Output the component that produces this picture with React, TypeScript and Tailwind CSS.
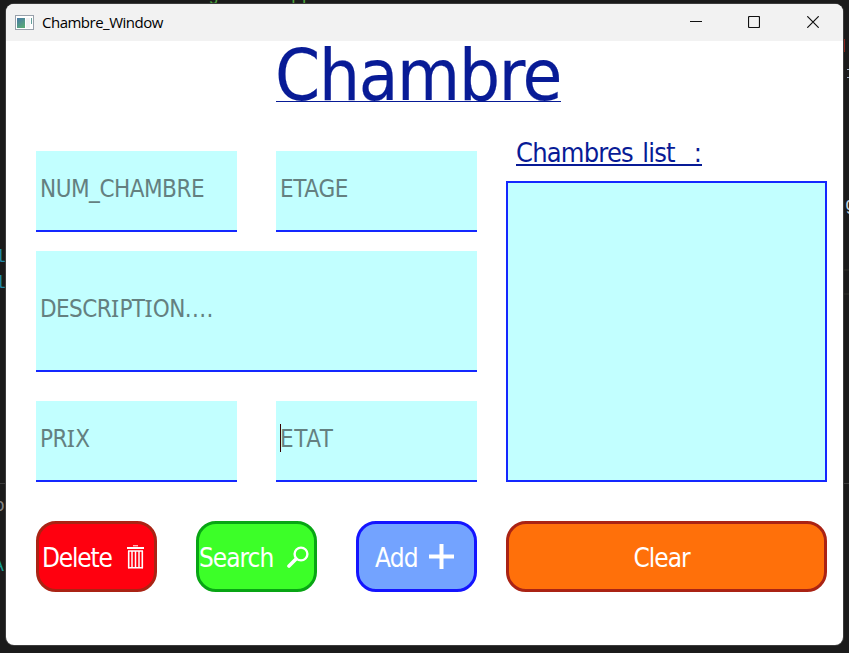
import React from "react";

const tahoma = "font-['DejaVu_Sans_Condensed','DejaVu_Sans',sans-serif] [font-stretch:condensed]";

function Caps({ text }: { text: string }) {
  return (
    <>
      {text.split(/(I)/).map((part, i) =>
        part === "I" ? (
          <span key={i} className="font-['Noto_Sans',sans-serif] leading-none tracking-[0.2px] [font-stretch:normal]">I</span>
        ) : (
          part
        )
      )}
    </>
  );
}

function Field({ label, tail, className, spacing, focused }: { label: string; tail?: string; className: string; spacing: string; focused?: boolean }) {
  return (
    <div className={`flex items-center border-b-2 border-[#1428ff] bg-[#c2ffff] pl-1 ${className}`}>
      {focused && <span className="-mr-px h-7 w-px shrink-0 -translate-y-[3px] bg-[#3a0000]" />}
      <span className={`h-7 -translate-y-[2px] whitespace-pre text-[24px] leading-7 text-[#648080] ${spacing}`}>
        <Caps text={label} />
        {tail && <span className="tracking-[0.4px]">{tail}</span>}
      </span>
    </div>
  );
}

function Backdrop() {
  return (
    <div className="absolute inset-0 overflow-hidden font-['Liberation_Mono',monospace] text-[18px] leading-5">
      <span className="absolute left-[208px] top-[-15px] text-[#4ba03c]">g</span>
      <span className="absolute left-[291px] top-[-15px] text-[#4ba03c]">pp</span>
      <span className="absolute left-[-5px] top-[247px] text-[#2387a5]">l</span>
      <span className="absolute left-[-5px] top-[273px] text-[#2387a5]">l</span>
      <span className="absolute left-[-6px] top-[496px] text-[#858585]">or</span>
      <span className="absolute left-[-7px] top-[556px] text-[#189c91]">A'</span>
      <span className="absolute left-0 top-[483px] h-px w-full bg-[#3c3c3c]" />
      <span className="absolute left-[843px] top-[39px] h-[13px] w-[2px] bg-[#8a251e]" />
      <span className="absolute left-[847px] top-[69px] h-px w-[2px] bg-[#a5b5c8]" />
      <span className="absolute left-[847px] top-[77px] h-px w-[2px] bg-[#a5b5c8]" />
      <span className="absolute left-[845px] top-[195px] text-[#c8d5e0]">g</span>
      <span className="absolute left-[843px] top-[269px] h-[2px] w-[6px] bg-[#252522]" />
      <span className="absolute left-[843px] top-[293px] h-[2px] w-[6px] bg-[#252522]" />
    </div>
  );
}

export default function App() {
  return (
    <div className={`relative h-[653px] w-[849px] overflow-hidden bg-[#1b1b1b] pl-[6px] pt-1 ${tahoma}`}>
      <Backdrop />
      <div className="relative h-[641px] w-[837px] overflow-hidden rounded-[8px] bg-white shadow-[0_0_0_1px_#3c3c3c]">
        <header className="flex h-[37px] items-center bg-[#f2f2f2] pl-[9px]">
          <svg width="19" height="16" viewBox="0 0 19 16" shapeRendering="crispEdges">
            <defs>
              <linearGradient id="pane" x1="0" y1="0" x2="0.6" y2="1">
                <stop offset="0" stopColor="#4878a8" />
                <stop offset="1" stopColor="#58a878" />
              </linearGradient>
            </defs>
            <rect x="0.5" y="0.5" width="18" height="14" fill="#fff" stroke="#98a0aa" />
            <rect x="2" y="3" width="8" height="10" fill="url(#pane)" />
            <rect x="11" y="3" width="4" height="10" fill="#f0f1f3" />
            <rect x="16" y="3" width="1" height="6" fill="#66a09c" />
          </svg>
          <span className="ml-2 -translate-y-px font-['Open_Sans',sans-serif] text-[15px] leading-5 tracking-[-0.5px] text-black [font-stretch:normal]">Chambre_Window</span>
          <div className="ml-auto mr-[24px] flex -translate-y-[1px] items-center gap-[46px]">
            <svg width="12" height="12" viewBox="0 0 12 12" className="-translate-x-px"><path d="M0 5.5H12" stroke="#111" /></svg>
            <svg width="12" height="12" viewBox="0 0 12 12" className="-translate-x-px"><rect x=".5" y=".5" width="11" height="11" rx="1" fill="none" stroke="#111" strokeWidth="1.2" /></svg>
            <svg width="12" height="12" viewBox="0 0 12 12"><path d="M.3.3L11.7 11.7M11.7.3L.3 11.7" stroke="#111" strokeWidth="1.2" /></svg>
          </div>
        </header>

        <h1 className="ml-[270px] mt-[-2px] flex h-[63px] w-[285px] items-end border-b border-[#081b96] text-[72px] leading-[85px] tracking-[-1.3px] text-[#081b96] [-webkit-text-stroke:0.2px_#081b96]">
          <span className="-mb-[17px] -ml-px">Chambre</span>
        </h1>

        <main className="ml-[30px] mt-[29px] flex gap-[29px]">
          <section className="w-[441px] pt-5">
            <div className="flex justify-between">
              <Field label="NUM_CHAMBRE" spacing="tracking-[-0.5px]" className="h-[81px] w-[201px]" />
              <Field label="ETAGE" spacing="tracking-[-0.3px]" className="h-[81px] w-[201px]" />
            </div>
            <Field label="DESCRIPTION" tail="...." spacing="tracking-[-0.6px]" className="mt-[19px] h-[121px] w-full" />
            <div className="mt-[29px] flex justify-between">
              <Field label="PRIX" spacing="tracking-[-0.6px]" className="h-[81px] w-[201px]" />
              <Field label="ETAT" focused spacing="tracking-[0.6px]" className="h-[81px] w-[201px]" />
            </div>
          </section>
          <section className="w-[321px]">
            <h2 className="ml-[10px] mt-[2px] h-[33px] w-[186px] border-b-2 border-[#081b96] text-[27px] leading-[39px] tracking-[-0.8px] [word-spacing:2.5px] whitespace-pre text-[#081b96]">Chambres list  :</h2>
            <div className="mt-[15px] h-[301px] border-2 border-[#1428ff] bg-[#c2ffff]" />
          </section>
        </main>

        <footer className="ml-[30px] mt-[39px] flex text-[26px] leading-8 whitespace-pre text-white">
          <button className="flex h-[71px] w-[121px] items-center rounded-[20px] border-[3px] border-[#aa2314] bg-[#ff000f] pl-[3px]">
            <span className="w-[84px] translate-y-px text-left tracking-[-1.2px]">Delete</span>
            <svg width="17" height="24" viewBox="0 0 17 24" className="translate-x-px" fill="none" stroke="#fff">
              <path d="M6 .8H11" />
              <path d="M0 3H17" strokeWidth="2" />
              <path d="M1.7 6V23.2M15.3 6V23.2" strokeWidth="1.6" />
              <path d="M1 6H16M1 22.7H16" strokeWidth="1.6" />
              <path d="M5 6V23M8.5 6V23M12 6V23" strokeWidth="1.5" />
            </svg>
          </button>
          <button className="ml-[39px] flex h-[71px] w-[121px] items-center rounded-[20px] border-[3px] border-[#08a514] bg-[#3cff28]">
            <span className="w-[88px] translate-y-px text-left tracking-[-1px]">Search</span>
            <svg width="22" height="22" viewBox="0 0 22 22" fill="none" stroke="#fff">
              <circle cx="14" cy="8" r="6.4" strokeWidth="2.4" />
              <path d="M9 13L2 20" strokeWidth="3.6" strokeLinecap="round" />
            </svg>
          </button>
          <button className="ml-[39px] flex h-[71px] w-[121px] items-center rounded-[20px] border-[3px] border-[#1414ff] bg-[#73a3ff] pl-4">
            <span className="w-[54px] translate-y-px text-left tracking-[-0.8px]">Add</span>
            <svg width="25" height="25" viewBox="0 0 25 25"><path d="M0 12.5H25M12.5 0V25" stroke="#fff" strokeWidth="4" /></svg>
          </button>
          <button className="ml-[29px] flex h-[71px] w-[321px] items-center justify-center rounded-[20px] border-[3px] border-[#aa2314] bg-[#ff700a] pr-[10px]">
            <span className="translate-y-px tracking-[-1px]">Clear</span>
          </button>
        </footer>
      </div>
    </div>
  );
}
